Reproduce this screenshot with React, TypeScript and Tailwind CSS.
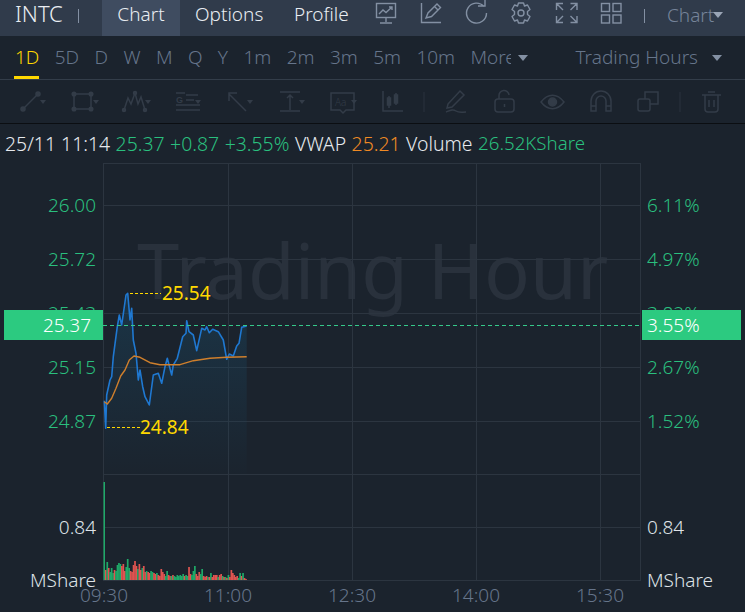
import React from "react";

const blue =
  "104.3,400.7 105.7,428.3 106.7,395 110,380 111.7,376.7 113.3,356.7 117.3,326.7 119.3,315 121.7,325 126,295 127.7,293.3 130,320 131.7,308.3 133.3,340 136,353.3 138.3,380 140,370 142.7,386.7 145,396.7 149.3,405 153.3,375 158.3,373.3 161.7,383.3 165,366.7 167.3,358.3 171.7,375 173.3,365 177.3,358.3 182.7,336.7 186,333.3 186.7,320.7 189,331.7 193.3,335 196.7,350.7 201.7,328.3 205,330 206.7,326.7 209.3,332.7 212.7,329.3 218.3,331.7 223.3,340 226.7,359.3 229.3,354 233.3,356 236.7,346 239,343.3 241.7,327.3 246.7,326";
const orange =
  "104.3,401.7 107.3,404 111.7,398.3 116,388.3 120.7,376 125,370 129.3,360 134,356 140,357.3 150,362.7 160,364.7 180,364.7 193.3,360.7 210,358.3 226.7,357.3 246.7,356.7";

// volume bars: height in px, r = red
const vol: [number, "g" | "r"][] = [
  [98, "g"], [10, "r"], [18, "g"], [12, "r"], [8, "g"], [12, "g"], [7, "g"], [10, "r"], [9, "g"], [15, "g"],
  [17, "g"], [16, "g"], [14, "r"], [16, "r"], [9, "r"], [13, "g"], [21, "g"], [12, "g"], [9, "r"], [8, "r"],
  [15, "r"], [19, "r"], [14, "r"], [11, "g"], [16, "r"], [10, "r"], [12, "g"], [14, "r"], [8, "r"], [9, "g"],
  [8, "r"], [7, "r"], [9, "g"], [8, "g"], [7, "r"], [6, "r"], [7, "g"], [5, "r"], [4, "r"], [11, "r"],
  [8, "r"], [6, "r"], [4, "g"], [9, "g"], [5, "r"], [4, "r"], [4, "g"], [5, "r"], [4, "g"], [3, "g"],
  [5, "g"], [4, "g"], [5, "g"], [4, "g"], [6, "g"], [4, "r"], [5, "g"], [4, "g"], [13, "r"], [6, "r"],
  [5, "g"], [9, "g"], [14, "g"], [6, "r"], [4, "r"], [8, "r"], [6, "g"], [11, "g"], [4, "r"], [3, "r"],
  [4, "r"], [3, "g"], [3, "r"], [7, "g"], [3, "r"], [5, "r"], [5, "r"], [5, "r"], [3, "g"], [5, "r"],
  [6, "r"], [4, "g"], [3, "r"], [3, "g"], [2, "r"], [5, "g"], [3, "r"], [10, "r"], [7, "r"], [5, "r"],
  [3, "r"], [4, "r"], [2, "g"], [7, "g"], [4, "r"], [7, "g"], [2, "r"], [1, "r"],
];

function Caret({ className }: { className: string }) {
  return (
    <svg width="10" height="6" viewBox="0 0 10 6" className={className}>
      <polygon points="0,0 10,0 5,6" fill="currentColor" />
    </svg>
  );
}

function HeaderIcons() {
  return (
    <svg width="250" height="26" viewBox="375 0 250 26" fill="none" stroke="#8390a3" strokeWidth="1.4" className="self-start">
      {/* monitor */}
      <rect x="376.5" y="3.5" width="19" height="14" />
      <path d="M386 18v4M380 23h12M379 14l4-4 3 2.500 6-5.500M389 7h3v3" />
      {/* chart pen */}
      <path d="M421.500 3v19.500H441M426 18l2-5 9-9 3.500 3.500-9 9zM434.500 6.500l3.500 3.500" />
      {/* refresh */}
      <path d="M484 6.500A10 10 0 1 0 486.500 13M478 6h7V0" />
      {/* gear */}
      <path d="M518.500 3h5l1 3 3-1 2.500 4.500-2.500 2v3l2.500 2-2.500 4.500-3-1-1 3h-5l-1-3-3 1-2.500-4.500 2.500-2v-3l-2.500-2 2.500-4.500 3 1z" strokeLinejoin="round" />
      <circle cx="521" cy="13" r="3" />
      {/* expand */}
      <path d="M556.500 10V3.500H563M556.500 3.500l6.500 6.500M570.500 3.500H577V10M577 3.500l-6.500 6.500M556.500 16v6.500H563M556.500 22.500L563 16M570.500 22.500H577V16M577 22.500L570.500 16" />
      {/* grid */}
      <rect x="601.500" y="3.500" width="8" height="8" />
      <rect x="613" y="3.500" width="8" height="8" />
      <rect x="601.500" y="15" width="8" height="8" />
      <rect x="613" y="15" width="8" height="8" />
    </svg>
  );
}

function ToolIcons() {
  const c = "#333c48";
  return (
    <svg width="745" height="43" viewBox="0 80 745 43" fill="none" stroke={c} strokeWidth="1.5" className="block">
      {/* small carets next to the drawing tools */}
      <g fill={c} stroke="none">
        <polygon points="40,100 46,100 43,104" />
        <polygon points="93,100 99,100 96,104" />
        <polygon points="145,100 151,100 148,104" />
        <polygon points="195,100 201,100 198,104" />
        <polygon points="247,100 253,100 250,104" />
        <polygon points="299,100 305,100 302,104" />
        <polygon points="351,100 357,100 354,104" />
      </g>
      {/* line */}
      <path d="M23 109l16-16" />
      <circle cx="23" cy="109" r="2" fill={c} />
      <circle cx="38" cy="94" r="2" fill={c} />
      {/* rect */}
      <rect x="74" y="94" width="17" height="15" />
      <circle cx="74" cy="94" r="1.800" fill={c} />
      <circle cx="91" cy="94" r="1.800" fill={c} />
      <circle cx="74" cy="109" r="1.800" fill={c} />
      <circle cx="91" cy="109" r="1.800" fill={c} />
      {/* wave */}
      <path d="M124 110l4-12 3 6 4-11 3 11 3-7 4 13" />
      <circle cx="124" cy="110" r="1.500" fill={c} />
      <circle cx="135" cy="93" r="1.500" fill={c} />
      <circle cx="145" cy="110" r="1.500" fill={c} />
      {/* fib */}
      <path d="M186 95h12M186 100h8M176 105h24M176 110h24M176 93h9" />
      <text x="176" y="103" fontSize="9" fontWeight="700" fill={c} stroke="none" fontFamily="'Liberation Sans', sans-serif">G</text>
      {/* arrow */}
      <path d="M229 94l17 17M229 101v-8h8" />
      {/* height */}
      <path d="M280 92h20M280 111h20M290 95v15M287 98l3-3 3 3" />
      {/* text */}
      <path d="M331 93h23v17h-8l-3 3-3-3h-9z" />
      <text x="335" y="106" fontSize="10" fill={c} stroke="none" fontFamily="'Noto Sans', sans-serif">Aa</text>
      {/* candles */}
      <path d="M383 91v20h20M389 96v12M396 93v12" />
      <rect x="387.500" y="98" width="3" height="7" fill={c} />
      <rect x="394.500" y="95" width="3" height="8" fill={c} />
      <path d="M424 92v20M680 92v20" stroke="#262e39" />
      {/* pen */}
      <path d="M448 104l12-13 4 4-12 12-5 1zM446 112c5-2 7-3 10-1s6 1 10 1" />
      {/* lock */}
      <rect x="495" y="99" width="19" height="13" rx="3" />
      <path d="M499 99v-3a5 5 0 0 1 10-1M504.500 104v3" />
      {/* eye */}
      <path d="M541 102c7-9 16-9 23 0-7 9-16 9-23 0z" />
      <circle cx="552.500" cy="102" r="4" fill={c} />
      {/* magnet */}
      <path d="M591 111V101a10 10 0 0 1 20 0v10h-5v-10a5 5 0 0 0-10 0v10zM591 106h5M606 106h5" />
      {/* copy */}
      <rect x="638" y="99" width="12" height="12" rx="2" />
      <path d="M645 99v-7h13v12h-8" />
      {/* trash */}
      <path d="M702 95h19M708 92h7M705 95v14a3 3 0 0 0 3 3h7a3 3 0 0 0 3-3V95M709 100v7M714 100v7" />
    </svg>
  );
}

const leftPrices = ["26.00", "25.72", "25.43", "25.15", "24.87"];
const rightPcts = ["6.11%", "4.97%", "3.82%", "2.67%", "1.52%"];

export default function App() {
  return (
    <div className="relative h-[612px] w-[745px] overflow-hidden bg-[#1b232d] font-['Noto_Sans',sans-serif] text-[19px] font-light">
      {/* top bar */}
      <div className="flex h-[36px] items-center bg-[#303b4b] text-[#e9edf2]">
        <span className="ml-[15px] w-[63px] pb-[10px] text-[22px] leading-[24px]">INTC</span>
        <span className="mb-[5px] h-[14px] w-px bg-[#8390a3]" />
        <div className="ml-[23px] flex h-full w-[78px] items-center justify-center bg-[#3f4c60] pb-[7px]">Chart</div>
        <span className="ml-[15px] w-[99px] pb-[7px]">Options</span>
        <span className="w-[81px] pb-[7px]">Profile</span>
        <HeaderIcons />
        <span className="mb-[5px] ml-[19px] h-[14px] w-px bg-[#8390a3]" />
        <span className="ml-[22px] pb-[6px] text-[#76849a]">Chart</span>
        <Caret className="-ml-px mb-[6px] text-[#9aa5b5]" />
      </div>

      {/* period tabs */}
      <div className="relative flex h-[44px] items-center border-b border-[#333d49] pl-[15px] text-[#66758b]">
        <div className="flex gap-[15.4px]">
          <span className="text-[#ffd800]">1D</span>
          <span>5D</span>
          <span>D</span>
          <span>W</span>
          <span>M</span>
          <span>Q</span>
          <span>Y</span>
          <span>1m</span>
          <span>2m</span>
          <span>3m</span>
          <span>5m</span>
          <span>10m</span>
          <span className="w-[41px] overflow-hidden">More</span>
        </div>
        <Caret className="ml-[7px] text-[#8390a3]" />
        <span className="ml-[47px]">Trading Hours</span>
        <Caret className="ml-[14px] text-[#8390a3]" />
        <span className="absolute bottom-0 left-[14px] h-[3px] w-[25px] bg-[#ffd800]" />
      </div>

      {/* drawing tools */}
      <div className="h-[44px] border-b border-[#0b0e12]">
        <ToolIcons />
      </div>

      {/* quote line */}
      <div className="flex h-[39px] items-center gap-[5.5px] pl-[5px] text-[19.4px] text-[#e6e9ee]">
        <span>25/11 11:14</span>
        <span className="text-[#2abf7e]">25.37</span>
        <span className="text-[#2abf7e]">+0.87</span>
        <span className="text-[#2abf7e]">+3.55%</span>
        <span>VWAP</span>
        <span className="text-[#f08a24]">25.21</span>
        <span>Volume</span>
        <span className="text-[18.7px] text-[#2abf7e]">26.52KShare</span>
      </div>

      {/* chart */}
      <div className="relative flex h-[420px]">
        <div className="w-[103px] pt-[15px] pr-[7px] text-right">
          {leftPrices.map((p) => (
            <div key={p} className="flex h-[54px] items-center justify-end text-[#2abf7e]">{p}</div>
          ))}
          <div className="mt-[52px] flex h-[54px] items-center justify-end text-[#dfe3e8]">0.84</div>
          <div className="-mt-[1px] flex h-[54px] items-center justify-end text-[#dfe3e8]">MShare</div>
        </div>

        <div className="relative w-[538px]">
          <div className="absolute left-[34px] top-[57px] text-[76px] leading-[100px] font-normal whitespace-nowrap text-[#29313c]">
            Trading Hour
          </div>
          <svg width="538" height="420" viewBox="103 163 538 420" fill="none" className="absolute inset-0">
            <defs>
              <linearGradient id="area" x1="0" y1="0" x2="0" y2="1">
                <stop offset="0" stopColor="#1a4a66" stopOpacity="0.45" />
                <stop offset="1" stopColor="#1a4a66" stopOpacity="0.02" />
              </linearGradient>
            </defs>
            <g stroke="#2c3540" strokeWidth="1">
              <path d="M103 163.500H640M103 205.500H640M103 259.500H640M103 313.500H640M103 367.500H640M103 421.500H640M103 474.500H640M103 527.500H640M103 580.500H640" />
              <path d="M103.500 163V581M228.500 163V581M352.500 163V581M476.500 163V581M600.500 163V581M640.500 163V581" />
            </g>
            <polygon points={`104.300,474 ${blue} 246.700,474`} fill="url(#area)" />
            <polyline points={blue} stroke="#1f78d1" strokeWidth="1.600" strokeLinejoin="round" />
            <polyline points={orange} stroke="#cf7f2c" strokeWidth="1.400" strokeLinejoin="round" />
            {vol.map(([h, c], i) => (
              <rect
                key={i}
                x={103.5 + i * 1.46}
                y={580 - h}
                width={i === 0 ? 1.5 : 1.7}
                height={h}
                fill={c === "g" ? "#1fa968" : "#df5450"}
              />
            ))}
            <path d="M103 325.500H641" stroke="#35c98a" strokeDasharray="4 3" />
            <path d="M130 293.500H161M107 427.500H140" stroke="#ffd800" strokeDasharray="3 2" />
          </svg>
          <span className="absolute left-[59px] top-[118px] leading-[24px] font-normal text-[#ffd800]">25.54</span>
          <span className="absolute left-[37px] top-[252px] leading-[24px] font-normal text-[#ffd800]">24.84</span>
        </div>

        <div className="flex-1 pt-[15px] pl-[6px]">
          {rightPcts.map((p) => (
            <div key={p} className="flex h-[54px] items-center text-[#2abf7e]">{p}</div>
          ))}
          <div className="mt-[52px] flex h-[54px] items-center text-[#dfe3e8]">0.84</div>
          <div className="-mt-[1px] flex h-[54px] items-center text-[#dfe3e8]">MShare</div>
        </div>

        {/* current price tags */}
        <div className="absolute left-[4px] top-[147px] flex h-[30px] w-[99px] items-center justify-end bg-[#2cca80] pr-[12px] text-white">25.37</div>
        <div className="absolute left-[642px] top-[147px] flex h-[30px] w-[99px] items-center bg-[#2cca80] pl-[5px] text-white">3.55%</div>
      </div>

      {/* time axis */}
      <div className="relative flex h-[24px] items-center pl-[42px] text-[#66758b]">
        {["09:30", "11:00", "12:30", "14:00", "15:30"].map((t) => (
          <span key={t} className="w-[124px] text-center">{t}</span>
        ))}
      </div>
    </div>
  );
}
